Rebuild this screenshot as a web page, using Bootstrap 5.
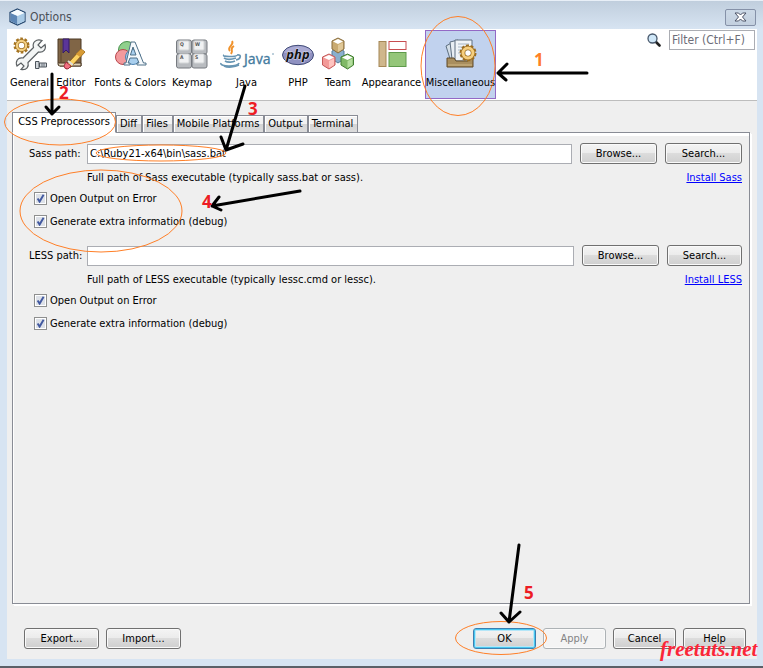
<!DOCTYPE html>
<html lang="en">
<head>
<meta charset="utf-8">
<meta name="viewport" content="width=device-width, initial-scale=1">
<title>Options</title>
<link href="https://cdn.jsdelivr.net/npm/bootstrap@5.3.0/dist/css/bootstrap.min.css" rel="stylesheet">
<style>
body{font-family:"DejaVu Sans Condensed","DejaVu Sans",sans-serif;font-size:11px;line-height:14px;color:#000;background:#d7e4f2}
.window{min-height:100vh;padding:0 6px 7px 7px;border:1px solid #e8eff7;border-width:1px 0 0 0;border-bottom:2px solid #5b6068}
.titlebar{height:28px;margin:0 -6px 0 -7px;padding:0 7px 0 9px;background:linear-gradient(#c0cedd,#d7e4f2);font-size:12px;color:#4a5058}
.close-btn{width:31px;height:17px;border:1px solid #8591a8;border-radius:2px;background:linear-gradient(#ccd9e7,#c3d0df)}
.toolbar{height:72px;background:#fff;border-bottom:1px solid #bdbdbd;padding:1px 2px 1px 1px}
.tool{height:69px;padding:6px 0 0;border:1px solid transparent;background:none;white-space:nowrap;display:flex;flex-direction:column;align-items:center;gap:5px}
.tool svg{height:34px;flex:none}
.tool.active{background:#c1d2ee;border-color:#9369c5}
.w-general{width:43px}.w-s{width:40px}.w-m{width:46px}.w-java{width:63px}.w-look{width:67px}.w-xl{width:71px}.w-xxl{width:78px}
.filter{width:86px;height:20px;border:1px solid #abadb3;padding:0 2px;font-size:12px}
.filter::placeholder{color:#6d6d78}
.client{background:#efefef;padding:11px 7px 10px 5px}
.tabs{margin-bottom:-1px;position:relative}
.tab{height:18px;padding:0 4px 0 3px;border:1px solid #898c95;background:linear-gradient(#f2f2f2 50%,#d4d4d4 50%,#dcdcdc);box-shadow:inset 1px 1px #fff}
.tab.active{height:21px;width:104px;padding:0 0 2px;background:#fff;border-bottom-color:#fff}
.panel{border:1px solid #898c95;box-shadow:inset 1px 0 #fff,inset 0 3px #fff,1px 1px #fff,2px 2px #fff;padding:10px 7px 0 16px}
.path-label{width:58px;flex:none}
.path{height:20px;border:1px solid #abadb3;background:#fff;padding:0 2px;min-width:0}
.less-row{padding-top:7px}
.pbtn{height:21px;width:77px;padding:0;border:1px solid #707070;border-radius:3px;background:linear-gradient(#f4f4f4,#ebebeb 49%,#dcdcdc 50%,#cfcfcf);box-shadow:inset 0 0 0 1px #fafafa;color:#000}
.pbtn.w-mid{width:75px}.pbtn.w-short{width:63px}
.pbtn.ok{border-color:#3c7fb1;box-shadow:inset 0 0 0 1px #48c8f0,inset 0 0 0 2px #b5e6f8}
.pbtn:disabled{border-color:#adb2b5;background:#f4f4f4;color:#838383}
.hint{padding-left:58px;margin:7px 0;height:14px}
.hint a{color:#00f}
.opt{height:23px;padding-left:5px;gap:3px}
.opt input{appearance:none;width:13px;height:13px;margin:0;border:1px solid #8e8f8f;box-shadow:inset 0 0 0 1px #fff;background:#dde1e8 url("data:image/svg+xml,%3Csvg xmlns='http://www.w3.org/2000/svg' viewBox='0 0 11 11'%3E%3Cpath d='M2.6 5.5 4.6 8.6 8.6 1.8' fill='none' stroke='%234259a0' stroke-width='1.9'/%3E%3C/svg%3E")}
.actions{gap:7px;padding:24px 4px 0 12px}
.overlay{position:absolute;inset:0;width:100%;height:100%;pointer-events:none}
.num{font:700 17px "Open Sans",sans-serif;fill:#ed1c24}
.num.first{fill:#ff7f27}
.brand-text{font:italic 700 21px "Liberation Serif",serif;fill:#fb2638}
</style>
<script src="https://cdn.jsdelivr.net/npm/bootstrap@5.3.0/dist/js/bootstrap.bundle.min.js"></script>
</head>
<body>
<main class="window d-flex flex-column position-relative">
 <header class="titlebar d-flex align-items-center gap-1 pt-1">
  <svg width="17" height="18" viewBox="0 0 17 18"><path d="M8.500 1 16 4.500v9L8.500 17 1 13.500v-9Z" fill="#e8f3fb" stroke="#24476f" stroke-width="1.200"/><path d="m1.500 5 7 3v8.500l-7-3.500Z" fill="#5c86b5"/><path d="m15.500 5-7 3v8.500l7-3.500Z" fill="#a8cae6"/><path d="m2 4.700 6.500-3 6.500 3-6.500 3Z" fill="#f5fbff"/></svg>
  <span>Options</span>
  <button class="close-btn ms-auto p-0 d-flex align-items-center justify-content-center" aria-label="Close"><svg width="13" height="10" viewBox="0 0 13 10"><path d="M1 1h3.500l2 2 2-2H12L8.500 5 12 9H8.500l-2-2-2 2H1l3.500-4Z" fill="#fff" stroke="#4b5266"/></svg></button>
 </header>
 <nav class="toolbar d-flex align-items-start">
  <button class="tool w-general"><svg width="34" viewBox="0 0 34 34"><g fill="none"><circle cx="8.500" cy="8.500" r="6.500" stroke="#a67420" stroke-width="3" stroke-dasharray="2.500 1.600"/><circle cx="8.500" cy="8.500" r="4.600" stroke="#9c6d20" stroke-width="3.600"/><circle cx="8.500" cy="8.500" r="4.600" stroke="#f3cf80" stroke-width="2.200"/></g><path d="M29 3.500c-6-2-10 2-8.500 7L10 21c-5-1-8 3-6 8l4-3 3 3-3 3.500c6 1 8-3 7-7L25.500 15c5 1 8-3 6.500-7.500l-4 3.500-3-3Z" fill="#f3f5f5" stroke="#5b6063" stroke-width="1.200"/><path d="M22.500 24.500h3.500v7h-3.500Zm4 1.500h7v4h-7Z" fill="#d2d7dc" stroke="#4e555d"/><path d="M29 26v4m2-4v4" stroke="#69717a"/></svg>General</button>
  <button class="tool w-s"><svg width="30" viewBox="0 0 30 34"><path d="M2 2h23v27H4q-2 0-2-2Z" fill="#806546" stroke="#4b3924"/><path d="M2 26h23v3H4" fill="#dfd1b7" stroke="#4b3924"/><path d="M5 2v23" stroke="#5f482e"/><path d="M7 2h6v14l-3-3-3 3Z" fill="#5b3598" stroke="#341c66"/><path d="m25 12 4 3-14 15-5 2 1-5Z" fill="#fbd262" stroke="#80551b"/><path d="m25 12 4 3-5 5-4-3Z" fill="#d79b35"/><path d="m10 25 5 4-3 3q-4 0-4-3Z" fill="#f17080" stroke="#9f3144"/><path d="m12 24 5 4" stroke="#ddd" stroke-width="2"/></svg>Editor</button>
  <button class="tool w-xxl"><svg width="34" viewBox="0 0 34 34"><circle cx="14" cy="13" r="8.500" fill="#8fd08c" stroke="#48904c"/><circle cx="10" cy="20" r="7.500" fill="#f29a9d" stroke="#b9464c"/><circle cx="20" cy="20" r="7.500" fill="#a9cfee" stroke="#4c82b2"/><path d="M18 5h4l8.500 21h2.500v2h-9v-2h2l-2-5h-7l-2 5h2v2h-6v-2h2Zm2 5-2.600 8h5.600Z" fill="#f6fafd" stroke="#4f7088"/></svg>Fonts &amp; Colors</button>
  <button class="tool w-m"><svg width="32" viewBox="0 0 32 34"><g stroke="#777b80" fill="#b9bcc0"><rect x=".5" y="3" width="15" height="14" rx="2"/><rect x="16" y="3" width="15" height="14" rx="2"/><rect x=".5" y="17" width="15" height="14" rx="2"/><rect x="16" y="17" width="15" height="14" rx="2"/></g><g fill="#f0f1f2" stroke="#d3d5d7"><rect x="3" y="4" width="10" height="9" rx="1"/><rect x="18" y="4" width="10" height="9" rx="1"/><rect x="3" y="17" width="10" height="9" rx="1"/><rect x="18" y="17" width="10" height="9" rx="1"/></g><g font-size="5" font-weight="700" fill="#555"><text x="4" y="9">Q</text><text x="19" y="9">W</text><text x="4" y="22">A</text><text x="19" y="22">S</text></g></svg>Keymap</button>
  <button class="tool w-java"><svg width="54" viewBox="0 0 54 34"><path d="M12 4c3 4-6 6-2 10M14 9c-5 3 0 3-3 8" fill="none" stroke="#f0922c" stroke-width="1.900"/><g fill="none" stroke="#6795b3" stroke-width="1.600"><path d="M4 18c-3 2 13 2 13 0M4 21c3 2 9 1 12 0M5 24c3 2 8 1 10 0M17 18c5-1 4 4-1 5M1 26c-2 4 17 4 18 0M4 29c4 2 11 1 15-1"/></g><text x="24" y="27" font-family="Noto Sans" font-size="14" fill="#467c9f" stroke="#467c9f" stroke-width=".3">Java</text><path d="M52 17h2" stroke="#7ba0b8"/></svg>Java</button>
  <button class="tool w-s"><svg width="34" viewBox="0 0 34 34"><ellipse cx="17" cy="18" rx="15.500" ry="9.700" fill="#8f91c1" stroke="#414b78"/><path d="M3 16c2-9 26-9 28 0" fill="#aaaad3"/><text x="17" y="22" text-anchor="middle" font-family="Noto Sans" font-size="13" font-style="italic" font-weight="700" fill="#111" stroke="#d5d6eb" stroke-width="1.200" paint-order="stroke">php</text></svg>PHP</button>
  <button class="tool w-s"><svg width="34" viewBox="0 0 34 34"><g stroke-linejoin="round"><path d="m11 14 6-3 6 3v8l-6 4-6-4Z" fill="#8aafcd" stroke="#557b9c"/><path d="m11 4 6-3 6 3v8l-6 4-6-4Z" fill="#c9aa70" stroke="#876b3b"/><path d="m12 4.500 5-2.500 5 2.500L17 7Z" fill="#fff"/><path d="m17 8v7l5-3V5.500Z" fill="#e0c898"/><path d="m1.500 20 6.500-3 6 3v8l-6 4-6.500-4Z" fill="#f29a98" stroke="#c45958"/><path d="m2.500 20.500 5.500-2.500 5 2.500L8 23Z" fill="#fff"/><path d="M8 24v7l5-3v-6.500Z" fill="#ffc4c0"/><path d="m20 20 6.500-3 6 3v8l-6 4-6.500-4Z" fill="#80b967" stroke="#417e31"/><path d="m21 20.500 5.500-2.500 5 2.500-5 2.500Z" fill="#fff"/><path d="M26.500 24v7l5-3v-6.500Z" fill="#b3dd9d"/></g></svg>Team</button>
  <button class="tool w-look"><svg width="32" viewBox="0 0 32 34"><rect x="3" y="4.500" width="7" height="25" fill="#cfb78c" stroke="#a58756"/><rect x="13" y="4.500" width="17" height="8" fill="#fff" stroke="#c74d50"/><rect x="13" y="15.500" width="17" height="14" fill="#94c679" stroke="#5e9a4b"/></svg>Appearance</button>
  <button class="tool w-xl active"><svg width="34" viewBox="0 0 34 34"><g stroke="#5e6f80"><path d="m2 9 7-4 7 17-9 3Z" fill="#d4dee7"/><path d="m6 5 8-2 5 19H8Z" fill="#e8eef3"/><path d="M11 3h17v21H11Z" fill="#f0f4f7"/></g><path d="M14 7h11M14 10h11M14 13h11M14 16h8" stroke="#a8b7c5"/><path d="M3 21h7l2 3h12l2-3h3v9H3Z" fill="#a98e5e" stroke="#604b28"/><path d="M4 28h24" stroke="#d0b886"/><circle cx="24" cy="16" r="7" fill="none" stroke="#9c6d20" stroke-width="3" stroke-dasharray="2.900 1.500"/><circle cx="24" cy="16" r="5" fill="none" stroke="#9c6d20" stroke-width="4.500"/><circle cx="24" cy="16" r="5" fill="none" stroke="#f6cf7e" stroke-width="3"/><circle cx="24" cy="16" r="2.400" fill="#fff"/></svg>Miscellaneous</button>
  <label class="ms-auto d-flex gap-2 align-items-center" aria-label="Filter"><svg width="14" height="14" viewBox="0 0 14 14"><path d="m8.500 8.500 4 4" stroke="#222" stroke-width="2.600" stroke-linecap="round"/><circle cx="5.500" cy="5.500" r="4.500" fill="#cfe7f8" stroke="#46566a" stroke-width="1.300"/></svg><input class="filter" placeholder="Filter (Ctrl+F)"></label>
 </nav>
 <section class="client d-flex flex-column flex-grow-1">
  <div class="tabs d-flex align-items-end" role="tablist">
   <button class="tab active" role="tab">CSS Preprocessors</button><button class="tab" role="tab">Diff</button><button class="tab" role="tab">Files</button><button class="tab" role="tab">Mobile Platforms</button><button class="tab" role="tab">Output</button><button class="tab" role="tab">Terminal</button>
  </div>
  <div class="panel flex-grow-1">
   <div class="d-flex align-items-center"><label class="path-label" for="sass">Sass path:</label><input class="path flex-grow-1" id="sass" value="C:\Ruby21-x64\bin\sass.bat"><button class="pbtn ms-2">Browse...</button><button class="pbtn ms-2">Search...</button></div>
   <div class="hint d-flex justify-content-between"><span>Full path of Sass executable (typically sass.bat or sass).</span><a href="#">Install Sass</a></div>
   <div class="opt d-flex align-items-start"><input type="checkbox" id="o1" checked><label for="o1">Open Output on Error</label></div>
   <div class="opt d-flex align-items-start"><input type="checkbox" id="o2" checked><label for="o2">Generate extra information (debug)</label></div>
   <div class="less-row d-flex align-items-center"><label class="path-label" for="less">LESS path:</label><input class="path flex-grow-1" id="less"><button class="pbtn ms-2">Browse...</button><button class="pbtn w-mid ms-2">Search...</button></div>
   <div class="hint d-flex justify-content-between"><span>Full path of LESS executable (typically lessc.cmd or lessc).</span><a href="#">Install LESS</a></div>
   <div class="opt d-flex align-items-start"><input type="checkbox" id="o3" checked><label for="o3">Open Output on Error</label></div>
   <div class="opt d-flex align-items-start"><input type="checkbox" id="o4" checked><label for="o4">Generate extra information (debug)</label></div>
  </div>
  <footer class="actions d-flex"><button class="pbtn w-mid">Export...</button><button class="pbtn w-mid">Import...</button><button class="pbtn ok w-short ms-auto">OK</button><button class="pbtn w-short" disabled>Apply</button><button class="pbtn w-short">Cancel</button><button class="pbtn w-short">Help</button></footer>
 </section>
 <svg class="overlay">
  <g fill="none" stroke="#ff7f27"><ellipse cx="458" cy="65" rx="37" ry="49.500"/><ellipse cx="60" cy="121" rx="55.500" ry="23"/><ellipse cx="161" cy="152" rx="65" ry="8"/><ellipse cx="101" cy="210" rx="81" ry="41"/><ellipse cx="501" cy="637" rx="45.500" ry="16.500"/></g>
  <g fill="none" stroke="#000" stroke-width="3" stroke-linecap="round" stroke-linejoin="round"><path d="M587 72H498M507 63l-9 9 8 7"/><path d="M52 73v40M46 106l6 7 7-7"/><path d="m245 85-19 64M221 136l5 13 17-6"/><path d="m300 190-88 15M219 196l-7 9 9 4"/><path d="m519 544-10 77M501 612l8 9 11-10"/></g>
  <text class="num first" x="534" y="65">1</text><text class="num" x="59" y="98">2</text><text class="num" x="248" y="114">3</text><text class="num" x="202" y="207">4</text><text class="num" x="524" y="598">5</text>
  <text class="brand-text" x="660" y="655">freetuts.net</text>
 </svg>
</main>
</body>
</html>
